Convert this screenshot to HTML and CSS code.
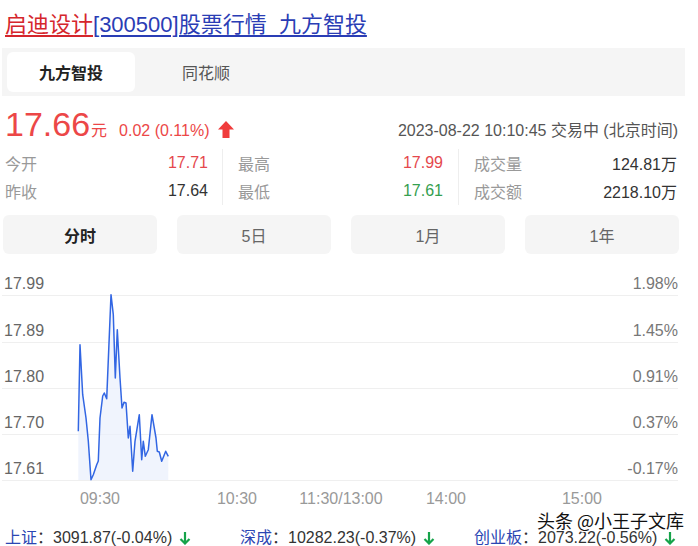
FILE: index.html
```html
<!DOCTYPE html>
<html lang="zh-CN">
<head>
<meta charset="utf-8">
<title>启迪设计[300500]股票行情_九方智投</title>
<link rel="stylesheet" href="styles.css">
</head>
<body>
<div class="page">
  <h1 class="title"><a class="title-name" href="#">启迪设计</a><a class="title-code" href="#">[300500]股票行情_九方智投</a></h1>

  <div class="src-tabs">
    <div class="src-tab src-tab-active">九方智投</div>
    <div class="src-tab">同花顺</div>
  </div>

  <div class="price-row">
    <span class="price">17.66</span><span class="unit">元</span>
    <span class="chg">0.02 (0.11%)</span>
    <svg class="up-arrow" width="16" height="17" viewBox="0 0 16 17"><path d="M8 0 L16 8.5 L11.5 8.5 L11.5 17 L4.5 17 L4.5 8.5 L0 8.5 Z" fill="#f03c3c"/></svg>
    <span class="time">2023-08-22 10:10:45 交易中 (北京时间)</span>
  </div>

  <div class="stats">
    <div class="stat-col stat-col-1">
      <div class="stat-row"><span class="stat-label">今开</span><span class="stat-val up">17.71</span></div>
      <div class="stat-row"><span class="stat-label">昨收</span><span class="stat-val">17.64</span></div>
    </div>
    <div class="stat-col stat-col-2">
      <div class="stat-row"><span class="stat-label">最高</span><span class="stat-val up">17.99</span></div>
      <div class="stat-row"><span class="stat-label">最低</span><span class="stat-val down">17.61</span></div>
    </div>
    <div class="stat-col stat-col-3">
      <div class="stat-row"><span class="stat-label">成交量</span><span class="stat-val">124.81万</span></div>
      <div class="stat-row"><span class="stat-label">成交额</span><span class="stat-val">2218.10万</span></div>
    </div>
  </div>

  <div class="periods">
    <div class="period period-active">分时</div>
    <div class="period">5日</div>
    <div class="period">1月</div>
    <div class="period">1年</div>
  </div>

  <div class="chart">
    <svg class="chart-svg" width="698" height="256" viewBox="0 0 698 256">
      <g class="grid" stroke="#efefef" stroke-width="1">
        <line x1="2" y1="41.5" x2="678" y2="41.5"/>
        <line x1="2" y1="88.5" x2="678" y2="88.5"/>
        <line x1="2" y1="134.5" x2="678" y2="134.5"/>
        <line x1="2" y1="180.5" x2="678" y2="180.5"/>
        <line x1="2" y1="226.5" x2="678" y2="226.5"/>
      </g>
      <g class="ylab">
        <text x="4" y="35">17.99</text>
        <text x="4" y="82">17.89</text>
        <text x="4" y="128">17.80</text>
        <text x="4" y="174">17.70</text>
        <text x="4" y="220">17.61</text>
      </g>
      <g class="ylab ylab-r" text-anchor="end">
        <text x="678" y="35">1.98%</text>
        <text x="678" y="82">1.45%</text>
        <text x="678" y="128">0.91%</text>
        <text x="678" y="174">0.37%</text>
        <text x="678" y="220">-0.17%</text>
      </g>
      <path fill="#e9effc" fill-opacity="0.7" d="M78.3 177.3 L80 90.7 L82.7 140.7 L86 164 L88.3 187 L91 225.7 L93.3 220.7 L96.7 210.7 L98.3 207 L100 164 L102.7 142 L104.3 139 L106.7 144.7 L111 40.7 L113.3 60.7 L115.3 124 L117.3 75.7 L120 124 L122 154 L124 148.3 L126 149 L128.3 184 L130 172.3 L132.7 217.3 L135 187.3 L139.3 160.7 L141.7 205.7 L143.3 187.3 L145.3 202.3 L148.3 195.7 L152 160.7 L156 184 L157.3 197.3 L159.3 198 L161.7 207.3 L165.7 197.3 L168.3 202.3 L168.3 226 L78.3 226 Z"/>
      <path fill="none" stroke="#3266e3" stroke-width="1.5" stroke-linejoin="round" d="M78.3 177.3 L80 90.7 L82.7 140.7 L86 164 L88.3 187 L91 225.7 L93.3 220.7 L96.7 210.7 L98.3 207 L100 164 L102.7 142 L104.3 139 L106.7 144.7 L111 40.7 L113.3 60.7 L115.3 124 L117.3 75.7 L120 124 L122 154 L124 148.3 L126 149 L128.3 184 L130 172.3 L132.7 217.3 L135 187.3 L139.3 160.7 L141.7 205.7 L143.3 187.3 L145.3 202.3 L148.3 195.7 L152 160.7 L156 184 L157.3 197.3 L159.3 198 L161.7 207.3 L165.7 197.3 L168.3 202.3"/>
      <g class="xlab" text-anchor="middle">
        <text x="100" y="250">09:30</text>
        <text x="237" y="250">10:30</text>
        <text x="341" y="250">11:30/13:00</text>
        <text x="446" y="250">14:00</text>
        <text x="582" y="250">15:00</text>
      </g>
    </svg>
  </div>

  <div class="indices">
    <div class="index">
      <span class="index-name">上证</span><span class="index-val">：3091.87(-0.04%)</span>
      <svg class="down-arrow" width="12" height="14" viewBox="0 0 12 14"><path d="M6 1 V12.5 M1.5 8 L6 12.5 L10.5 8" fill="none" stroke="#16a34a" stroke-width="2.2"/></svg>
    </div>
    <div class="index">
      <span class="index-name">深成</span><span class="index-val">：10282.23(-0.37%)</span>
      <svg class="down-arrow" width="12" height="14" viewBox="0 0 12 14"><path d="M6 1 V12.5 M1.5 8 L6 12.5 L10.5 8" fill="none" stroke="#16a34a" stroke-width="2.2"/></svg>
    </div>
    <div class="index">
      <span class="index-name">创业板</span><span class="index-val">：2073.22(-0.56%)</span>
      <svg class="down-arrow" width="12" height="14" viewBox="0 0 12 14"><path d="M6 1 V12.5 M1.5 8 L6 12.5 L10.5 8" fill="none" stroke="#16a34a" stroke-width="2.2"/></svg>
    </div>
  </div>

  <div class="watermark">头条 @小王子文库</div>
</div>
</body>
</html>
```

FILE: styles.css
```css
html, body {
  margin: 0;
  padding: 0;
  background: #fff;
}
body {
  font-family: "Liberation Sans", "Noto Sans CJK SC", Arial, sans-serif;
  font-size: 16px;
  color: #333;
  overflow: hidden;
}
.page {
  position: relative;
  width: 698px;
  height: 546px;
  overflow: hidden;
}

/* title */
.title {
  margin: 0;
  height: 48px;
  padding: 9px 0 0 5px;
  box-sizing: border-box;
  font-size: 22px;
  font-weight: normal;
  line-height: 32px;
  white-space: nowrap;
}
.title a {
  text-decoration: underline;
  text-decoration-thickness: 1.5px;
  text-underline-offset: 3px;
}
.title-name { color: #d5262c; }
.title-code { color: #2a3db5; }

/* source tabs */
.src-tabs {
  display: flex;
  gap: 7px;
  height: 48px;
  margin: 0 13px 0 2px;
  padding: 4px 5px;
  box-sizing: border-box;
  background: #f5f5f5;
}
.src-tab {
  width: 128px;
  display: flex;
  align-items: center;
  justify-content: center;
  border-radius: 6px;
  color: #555;
  font-size: 16px;
}
.src-tab-active {
  background: #fff;
  color: #222;
  font-weight: bold;
}

/* price row */
.price-row {
  display: flex;
  align-items: baseline;
  height: 42px;
  margin-top: 10px;
  padding: 0 20px 0 5px;
  box-sizing: border-box;
  white-space: nowrap;
}
.price {
  font-size: 34px;
  color: #ec4747;
  line-height: 36px;
}
.unit {
  font-size: 16px;
  color: #ec4747;
  margin-left: 1px;
}
.chg {
  margin-left: 12px;
  font-size: 16px;
  color: #ec4747;
}
.up-arrow {
  margin-left: 8px;
  align-self: center;
  margin-top: 4px;
}
.time {
  margin-left: auto;
  color: #555;
  font-size: 16px;
}

/* stats */
.stats {
  display: grid;
  grid-template-columns: 223px 236px 1fr;
  margin-top: 1px;
}
.stat-col {
  display: flex;
  flex-direction: column;
}
.stat-col-1 {
  padding: 0 14px 0 5px;
  border-right: 1px solid #eeeeee;
}
.stat-col-2 {
  padding: 0 15px;
  border-right: 1px solid #eeeeee;
}
.stat-col-3 {
  padding: 0 21px 0 15px;
}
.stat-row {
  display: flex;
  justify-content: space-between;
  align-items: center;
  height: 28px;
}
.stat-label { color: #999; }
.stat-val { color: #333; }
.stat-val.up { color: #e5484d; }
.stat-val.down { color: #35a050; }

/* periods */
.periods {
  display: grid;
  grid-template-columns: repeat(4, 154px);
  column-gap: 20px;
  margin-top: 10px;
  padding-left: 3px;
}
.period {
  height: 39px;
  display: flex;
  align-items: center;
  justify-content: center;
  border-radius: 6px;
  background: #f5f5f5;
  color: #666;
}
.period-active {
  color: #222;
  font-weight: bold;
}

/* chart */
.chart {
  height: 256px;
}
.chart-svg {
  display: block;
}
.chart-svg text {
  font-family: "Liberation Sans", Arial, sans-serif;
  font-size: 16px;
}
.ylab text { fill: #666; }
.ylab-r text { fill: #777; }
.xlab text { fill: #999; }

/* indices */
.indices {
  display: grid;
  grid-template-columns: 235px 234px 1fr;
  padding: 13px 0 0 5px;
  line-height: 30px;
  white-space: nowrap;
}
.index {
  display: flex;
  align-items: center;
}
.index-name { color: #2b46b3; }
.index-val { color: #333; }
.down-arrow {
  margin-left: 7px;
}

/* watermark overlay */
.watermark {
  position: absolute;
  left: 537px;
  top: 508px;
  font-family: "Noto Sans CJK SC", sans-serif;
  font-size: 18px;
  line-height: 24px;
  color: #111;
  white-space: nowrap;
  text-shadow: 1px 0 0 #fff, -1px 0 0 #fff, 0 1px 0 #fff, 0 -1px 0 #fff, 1px 1px 0 #fff, -1px -1px 0 #fff, 1px -1px 0 #fff, -1px 1px 0 #fff;
}
```
